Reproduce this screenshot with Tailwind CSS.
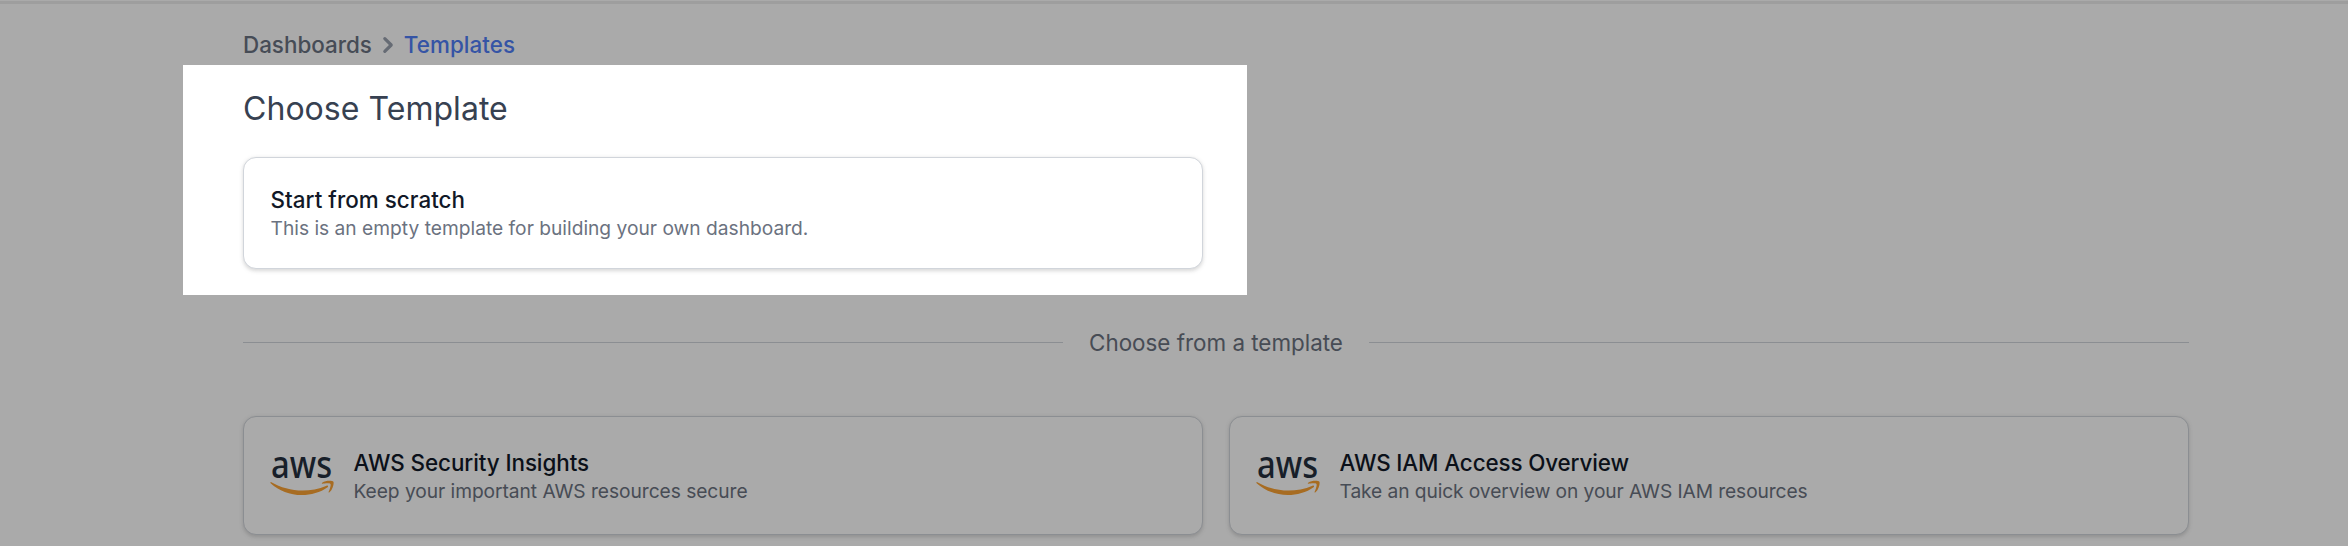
<!DOCTYPE html>
<html lang="en">
<head>
<meta charset="utf-8">
<title>Choose Template</title>
<script src="https://cdn.jsdelivr.net/npm/@tailwindcss/browser@4"></script>
</head>
<body class="relative h-[546px] overflow-hidden bg-white font-['Inter',sans-serif] antialiased">
  <svg class="hidden" aria-hidden="true">
    <symbol id="aws" viewBox="0 0 304 182">
      <text x="5" y="99" textLength="290" lengthAdjust="spacingAndGlyphs" font-family="Noto Sans, sans-serif" font-weight="500" font-size="180" fill="#252f3e">aws</text>
      <path fill="#fba233" d="M273.5,143.7c-32.9,24.3-80.7,37.2-121.8,37.2c-57.6,0-109.5-21.3-148.7-56.7c-3.1-2.8-0.3-6.6,3.4-4.4c42.4,24.6,94.7,39.5,148.8,39.5c36.5,0,76.6-7.6,113.5-23.2C274.2,133.6,278.9,139.7,273.5,143.7z"/>
      <path fill="#fba233" d="M287.2,128.1c-4.2-5.4-27.8-2.6-38.5-1.3c-3.2,0.4-3.7-2.4-0.8-4.5c18.8-13.2,49.7-9.4,53.3-5c3.6,4.5-1,35.4-18.6,50.2c-2.7,2.3-5.3,1.1-4.1-1.9C282.5,155.7,291.4,133.4,287.2,128.1z"/>
    </symbol>
  </svg>

  <div class="mt-px h-[3px] bg-[#eeeeee]"></div>

  <main class="ml-[243px] w-[1946px]">
    <nav class="mt-[25px] flex h-8 items-center text-[22.4px] leading-8 font-medium">
      <a class="text-gray-500">Dashboards</a>
      <svg class="size-8 shrink-0 text-gray-400" viewBox="0 0 20 20" fill="currentColor"><path fill-rule="evenodd" d="M7.293 14.707a1 1 0 010-1.414L10.586 10 7.293 6.707a1 1 0 011.414-1.414l4 4a1 1 0 010 1.414l-4 4a1 1 0 01-1.414 0z"/></svg>
      <a class="tracking-[0.06px] text-[#507ef8]">Templates</a>
    </nav>

    <h1 class="mt-[25px] text-[32px] leading-[45px] tracking-[0.04px] text-[#374151]">Choose Template</h1>

    <section class="mt-[26px] grid grid-cols-2 gap-[26px]">
      <article class="flex h-[112px] items-center rounded-[13px] border border-[#d1d5db] bg-white px-[26.5px] shadow-[0_1.6px_4.8px_rgba(0,0,0,.1),0_1.6px_3.2px_rgba(0,0,0,.06)]">
        <div>
          <h2 class="text-[22.4px] leading-8 font-medium tracking-[0.05px] text-[#111827]">Start from scratch</h2>
          <p class="text-[19.2px] leading-[25.6px] text-[#6b7280]">This is an empty template for building your own dashboard.</p>
        </div>
      </article>
    </section>

    <div class="mt-[57px] flex h-8 items-center gap-[26px]">
      <span class="h-px flex-1 bg-[#d1d5db]"></span>
      <span class="pt-0.5 text-[22.4px] leading-8 text-[#6b7280]">Choose from a template</span>
      <span class="h-px flex-1 bg-[#d1d5db]"></span>
    </div>

    <section class="mt-[58px] grid grid-cols-2 gap-[26px]">
      <article class="flex h-[119px] items-center gap-[19.5px] rounded-[13px] border border-[#d1d5db] bg-white px-[26px] shadow-[0_1.6px_4.8px_rgba(0,0,0,.1),0_1.6px_3.2px_rgba(0,0,0,.06)]">
        <svg class="mt-px h-[38.3px] w-16 shrink-0 overflow-visible"><use href="#aws"/></svg>
        <div>
          <h2 class="text-[22.4px] leading-8 font-medium tracking-[-0.07px] text-[#111827]">AWS Security Insights</h2>
          <p class="text-[19.2px] leading-[25.6px] tracking-[-0.05px] text-[#6b7280]">Keep your important AWS resources secure</p>
        </div>
      </article>
      <article class="flex h-[119px] items-center gap-[19.5px] rounded-[13px] border border-[#d1d5db] bg-white px-[26px] shadow-[0_1.6px_4.8px_rgba(0,0,0,.1),0_1.6px_3.2px_rgba(0,0,0,.06)]">
        <svg class="mt-px h-[38.3px] w-16 shrink-0 overflow-visible"><use href="#aws"/></svg>
        <div>
          <h2 class="text-[22.4px] leading-8 font-medium tracking-[-0.12px] text-[#111827]">AWS IAM Access Overview</h2>
          <p class="text-[19.2px] leading-[25.6px] tracking-[-0.09px] text-[#6b7280]">Take an quick overview on your AWS IAM resources</p>
        </div>
      </article>
    </section>
  </main>

  <!-- Spotlight: dims everything outside the box -->
  <div class="pointer-events-none absolute top-[65px] left-[183px] h-[230px] w-[1064px] shadow-[0_0_0_2400px_rgba(0,0,0,.333)]"></div>
</body>
</html>
